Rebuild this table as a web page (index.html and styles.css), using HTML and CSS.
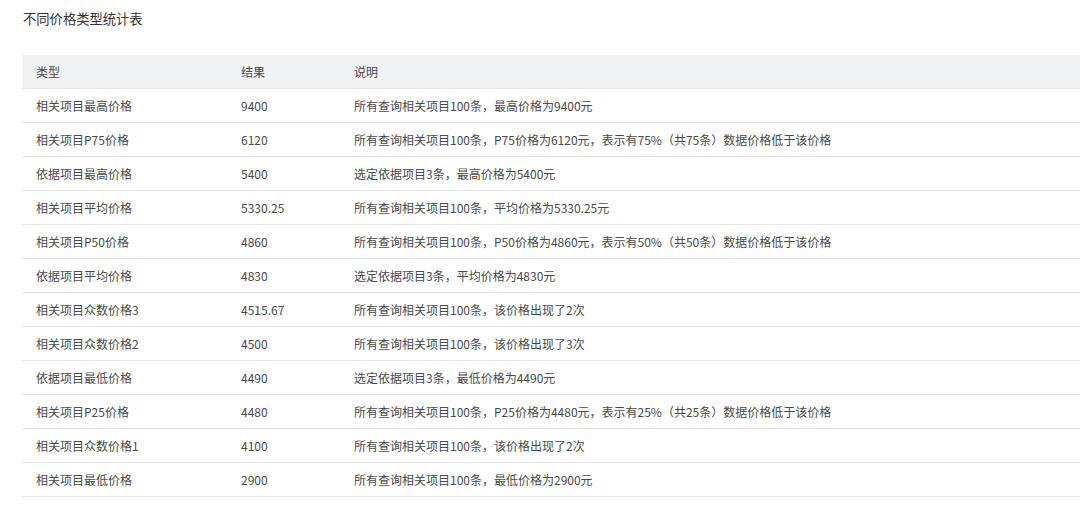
FILE: index.html
```html
<!DOCTYPE html>
<html lang="zh">
<head>
<meta charset="utf-8">
<link rel="stylesheet" href="styles.css">
</head>
<body>
<div class="page">
  <div class="title">不同价格类型统计表</div>
  <table class="stats">
    <colgroup>
      <col class="c1"><col class="c2"><col class="c3">
    </colgroup>
    <thead>
      <tr><th>类型</th><th>结果</th><th>说明</th></tr>
    </thead>
    <tbody>
      <tr><td>相关项目最高价格</td><td>9400</td><td>所有查询相关项目100条，最高价格为9400元</td></tr>
      <tr><td>相关项目P75价格</td><td>6120</td><td>所有查询相关项目100条，P75价格为6120元，表示有75%（共75条）数据价格低于该价格</td></tr>
      <tr><td>依据项目最高价格</td><td>5400</td><td>选定依据项目3条，最高价格为5400元</td></tr>
      <tr><td>相关项目平均价格</td><td>5330.25</td><td>所有查询相关项目100条，平均价格为5330.25元</td></tr>
      <tr><td>相关项目P50价格</td><td>4860</td><td>所有查询相关项目100条，P50价格为4860元，表示有50%（共50条）数据价格低于该价格</td></tr>
      <tr><td>依据项目平均价格</td><td>4830</td><td>选定依据项目3条，平均价格为4830元</td></tr>
      <tr><td>相关项目众数价格3</td><td>4515.67</td><td>所有查询相关项目100条，该价格出现了2次</td></tr>
      <tr><td>相关项目众数价格2</td><td>4500</td><td>所有查询相关项目100条，该价格出现了3次</td></tr>
      <tr><td>依据项目最低价格</td><td>4490</td><td>选定依据项目3条，最低价格为4490元</td></tr>
      <tr><td>相关项目P25价格</td><td>4480</td><td>所有查询相关项目100条，P25价格为4480元，表示有25%（共25条）数据价格低于该价格</td></tr>
      <tr><td>相关项目众数价格1</td><td>4100</td><td>所有查询相关项目100条，该价格出现了2次</td></tr>
      <tr><td>相关项目最低价格</td><td>2900</td><td>所有查询相关项目100条，最低价格为2900元</td></tr>
    </tbody>
  </table>
</div>
</body>
</html>
```

FILE: styles.css
```css
html, body {
  margin: 0;
  padding: 0;
  background: #ffffff;
  overflow: hidden;
}
body {
  font-family: "Noto Sans CJK SC", "Noto Sans", sans-serif;
  color: #4a4a4a;
}
.page {
  padding: 10px 0 0 22px;
}
.title {
  font-size: 13.3px;
  line-height: 18px;
  color: #333333;
  padding-left: 1px;
  margin-bottom: 27px;
}
.stats {
  border-collapse: collapse;
  width: 1100px;
  table-layout: fixed;
  font-size: 12px;
}
.c1 { width: 205px; }
.c2 { width: 113px; }
.stats th,
.stats td {
  text-align: left;
  padding: 0 14px;
  height: 33px;
  border-bottom: 1px solid #e6e7ea;
  white-space: nowrap;
  font-weight: normal;
}
.stats th {
  background: #f0f1f3;
  color: #4a4a4a;
}
.stats td {
  color: #4a4a4a;
}
```
